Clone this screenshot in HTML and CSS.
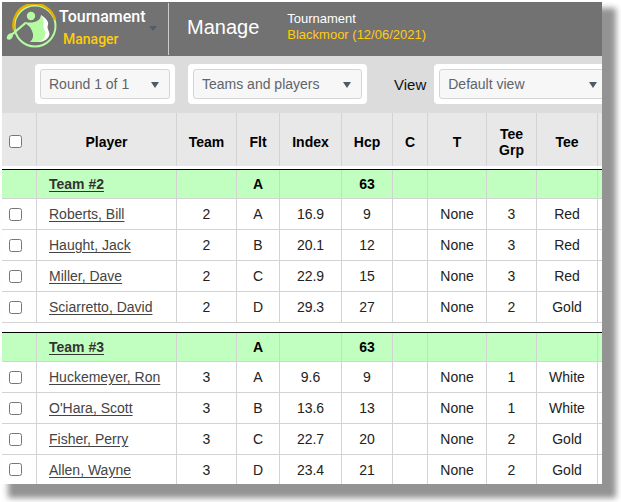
FILE: index.html
```html
<!DOCTYPE html>
<html lang="en">
  <head>
    <meta charset="UTF-8" />
    <title>Tournament Manager</title>
    <link rel="stylesheet" href="styles.css">
  </head>
  <body>
    <div class="panel">

    <header>
      <button class="brand" aria-label="Tournament Manager menu">
        <svg class="logo" viewBox="0 0 52 48" width="52" height="48" aria-hidden="true">
          <circle cx="29" cy="22" r="20.500" fill="none" stroke="#b5fba0" stroke-width="2" />
          <path d="M8 26A21 21 0 0 1 49 16" fill="none" stroke="#e3b000" stroke-width="2.500" />
          <circle cx="25" cy="12" r="4.200" fill="#b5fba0" />
          <path d="M19 18L6 29C3 29 0 32 1 35C3 37 7 35 7 31L20 20Z" fill="#b5fba0" />
          <path d="M35 11C40 14 43 18 42 21C40 25 45 28 43 32C41 36 37 38 32 38Z" fill="#fff" />
          <path d="M19 18C27 20 35 17 35 11C40 17 36 21 38 25C41 31 38 37 32 38L24 38C29 33 27 29 25 25C24 22 21 21 19 19Z" fill="#b5fba0" />
        </svg>
        <span class="brand-name">Tournament<span>Manager</span></span>
        <span class="menu-arrow"></span>
      </button>
      <h1>Manage</h1>
      <p class="event">Tournament<br><a href="#">Blackmoor (12/06/2021)</a></p>
    </header>

    <div class="toolbar">
      <span class="picker">
        <select class="round" aria-label="Round"><option>Round 1 of 1</option></select>
      </span>
      <span class="picker">
        <select class="show" aria-label="Show"><option>Teams and players</option></select>
      </span>
      <label for="view">View</label>
      <span class="picker">
        <select class="view" id="view"><option>Default view</option></select>
      </span>
    </div>

    <table>
      <colgroup>
        <col class="c-check"><col class="c-player"><col class="c-team"><col class="c-flt"><col class="c-index"><col class="c-hcp"><col class="c-c"><col class="c-t"><col class="c-grp"><col class="c-tee"><col>
      </colgroup>
      <thead>
        <tr>
          <th><input type="checkbox" aria-label="Select all"></th>
          <th>Player</th><th>Team</th><th>Flt</th><th>Index</th><th>Hcp</th><th>C</th><th>T</th><th>Tee Grp</th><th>Tee</th><th></th>
        </tr>
      </thead>
      <tbody>
        <tr class="gap-top"><td colspan="11"></td></tr>
        <tr class="team"><td></td><td><a href="#">Team #2</a></td><td></td><td>A</td><td></td><td>63</td><td></td><td></td><td></td><td></td><td></td></tr>
        <tr><td><input type="checkbox" aria-label="Roberts, Bill"></td><td><a href="#">Roberts, Bill</a></td><td>2</td><td>A</td><td>16.9</td><td>9</td><td></td><td>None</td><td>3</td><td>Red</td><td></td></tr>
        <tr><td><input type="checkbox" aria-label="Haught, Jack"></td><td><a href="#">Haught, Jack</a></td><td>2</td><td>B</td><td>20.1</td><td>12</td><td></td><td>None</td><td>3</td><td>Red</td><td></td></tr>
        <tr><td><input type="checkbox" aria-label="Miller, Dave"></td><td><a href="#">Miller, Dave</a></td><td>2</td><td>C</td><td>22.9</td><td>15</td><td></td><td>None</td><td>3</td><td>Red</td><td></td></tr>
        <tr><td><input type="checkbox" aria-label="Sciarretto, David"></td><td><a href="#">Sciarretto, David</a></td><td>2</td><td>D</td><td>29.3</td><td>27</td><td></td><td>None</td><td>2</td><td>Gold</td><td></td></tr>
      </tbody>
      <tbody>
        <tr class="gap"><td colspan="11"></td></tr>
        <tr class="team"><td></td><td><a href="#">Team #3</a></td><td></td><td>A</td><td></td><td>63</td><td></td><td></td><td></td><td></td><td></td></tr>
        <tr><td><input type="checkbox" aria-label="Huckemeyer, Ron"></td><td><a href="#">Huckemeyer, Ron</a></td><td>3</td><td>A</td><td>9.6</td><td>9</td><td></td><td>None</td><td>1</td><td>White</td><td></td></tr>
        <tr><td><input type="checkbox" aria-label="O'Hara, Scott"></td><td><a href="#">O'Hara, Scott</a></td><td>3</td><td>B</td><td>13.6</td><td>13</td><td></td><td>None</td><td>1</td><td>White</td><td></td></tr>
        <tr><td><input type="checkbox" aria-label="Fisher, Perry"></td><td><a href="#">Fisher, Perry</a></td><td>3</td><td>C</td><td>22.7</td><td>20</td><td></td><td>None</td><td>2</td><td>Gold</td><td></td></tr>
        <tr class="last"><td><input type="checkbox" aria-label="Allen, Wayne"></td><td><a href="#">Allen, Wayne</a></td><td>3</td><td>D</td><td>23.4</td><td>21</td><td></td><td>None</td><td>2</td><td>Gold</td><td></td></tr>
      </tbody>
    </table>

    </div>
  </body>
</html>
```
FILE: styles.css
```css
* {
  box-sizing: border-box;
}
body {
  margin: 0;
  padding: 2px 19px 18px 2px;
  background: #fff;
  font-family: "Liberation Sans", Arial, sans-serif;
  font-size: 14px;
  color: #222;
}
.panel {
  background: #fff;
  box-shadow: 10px 10px 6px 4px #939393;
}

header {
  display: flex;
  align-items: center;
  height: 54px;
  background: #727272;
  color: #fff;
}
.brand {
  display: flex;
  flex: none;
  align-items: center;
  width: 167px;
  height: 52px;
  padding: 0 0 2px 4px;
  border: none;
  border-right: 1px solid #ccc;
  background: none;
  color: #fff;
  text-align: left;
  cursor: pointer;
}
.logo {
  flex: none;
}
.brand-name {
  width: 83px;
  margin-left: 1px;
  font-family: Roboto, "Liberation Sans", sans-serif;
  font-size: 16px;
  font-weight: 500;
  line-height: 23px;
}
.brand-name span {
  display: block;
  padding-left: 4px;
  font-size: 14px;
  color: #ffcc0a;
}
.menu-arrow {
  margin-left: 7px;
  border: 4px solid transparent;
  border-top: 5px solid #555c68;
  border-bottom: none;
}
h1 {
  margin: 0 0 4px 18px;
  font-size: 20px;
  font-weight: normal;
}
.event {
  margin: 0 0 4px 28px;
  font-size: 13px;
  line-height: 16px;
}
.event a {
  color: #fc1;
  text-decoration: none;
}

.toolbar {
  display: flex;
  align-items: center;
  height: 57px;
  padding: 0 0 1px 33px;
  background: #dcdcdc;
  overflow: hidden;
}
.picker {
  position: relative;
  flex: none;
  padding: 5px;
  border-radius: 4px;
  background: #fff;
}
.picker::after {
  content: "";
  position: absolute;
  top: 18px;
  right: 16px;
  border: 4px solid transparent;
  border-top: 6px solid #505a66;
  border-bottom: none;
  pointer-events: none;
}
.picker + .picker {
  margin-left: 13px;
}
.toolbar label {
  margin: 0 8px 0 27px;
  font-size: 15px;
  color: #111;
}
select {
  display: block;
  appearance: none;
  height: 30px;
  padding: 0 8px;
  border: 1px solid #d5d5d5;
  border-radius: 3px;
  background: #f7f7f7;
  color: #60646a;
  font-family: inherit;
  font-size: 14px;
}
.round {
  width: 130px;
}
.show {
  width: 169px;
}
.view {
  width: 169px;
}

table {
  width: 100%;
  table-layout: fixed;
  border-collapse: separate;
  border-spacing: 0;
}
.c-check { width: 35px; }
.c-player { width: 140px; }
.c-team { width: 60px; }
.c-flt { width: 43px; }
.c-index { width: 62px; }
.c-hcp { width: 51px; }
.c-c { width: 35px; }
.c-t { width: 59px; }
.c-grp { width: 50px; }
.c-tee { width: 61px; }

th, td {
  padding: 0;
  border-right: 1px solid #d3d3d3;
  text-align: center;
}
th:last-child, td:last-child {
  border-right: none;
}
th {
  height: 53px;
  padding: 4px 8px 0;
  background: #e8e8e8;
  color: #000;
  line-height: 16px;
}
th:first-child {
  padding: 4px 0 0;
}
td {
  height: 31px;
  border-bottom: 1px solid #d3d3d3;
}
td:nth-child(2) {
  padding-left: 12px;
  text-align: left;
}
td a {
  color: #444;
  text-underline-offset: 2px;
}
input[type="checkbox"] {
  display: block;
  margin: 0 0 0 7px;
  width: 13px;
  height: 13px;
}
.team td {
  height: 29px;
  background: #c1ffc1;
  color: #000;
  font-weight: bold;
}
.team a {
  color: #333;
}
.gap-top td, .gap td {
  height: 4px;
  border-bottom: 1px solid #000;
}
.gap td {
  height: 10px;
}
.last td {
  height: 29px;
  border-bottom: none;
}
```
